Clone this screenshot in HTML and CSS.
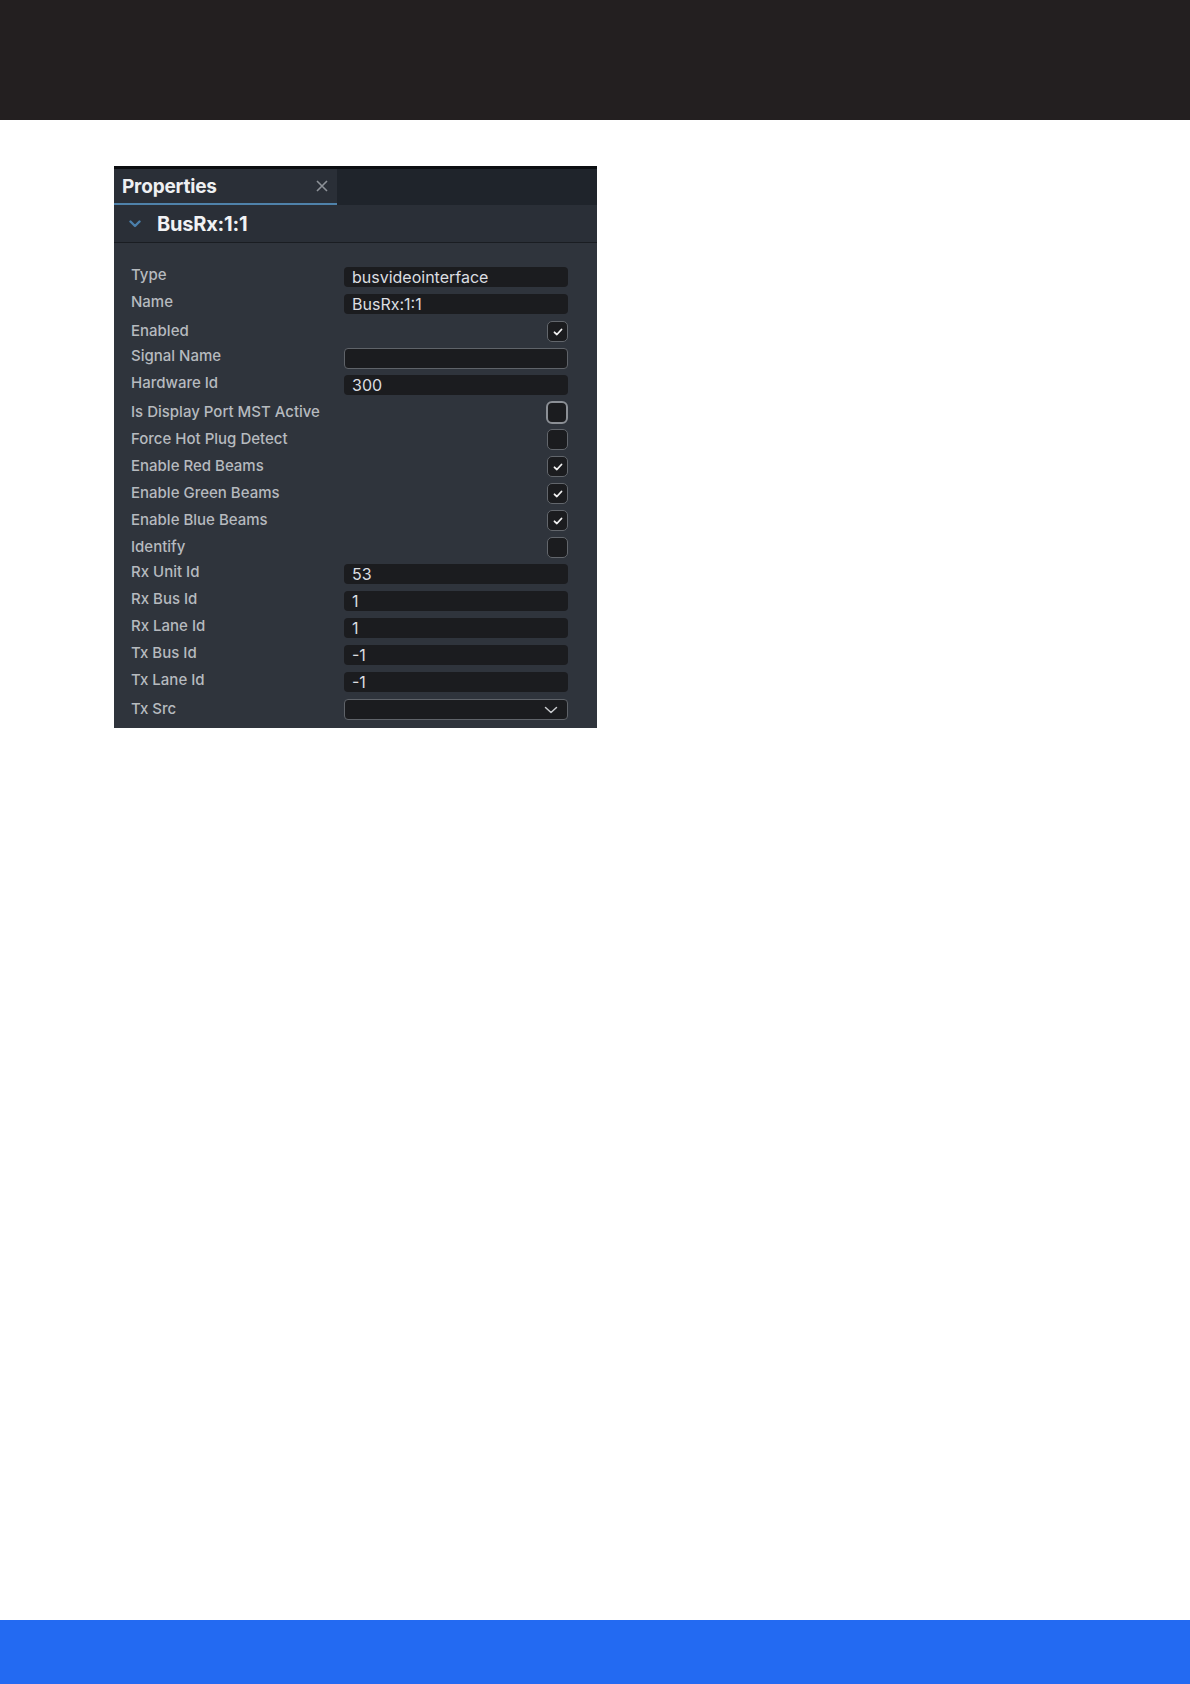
FILE: index.html
```html
<!DOCTYPE html>
<html lang="en">
<head>
<meta charset="utf-8">
<title>Properties</title>
<link rel="stylesheet" href="styles.css">
</head>
<body>
<header class="topbar"></header>
<main class="page">
  <section class="panel">
    <div class="tabbar">
      <div class="tab">
        <span class="tab-title">Properties</span>
        <svg class="tab-close" width="12" height="12" viewBox="0 0 12 12"><path d="M1 1 L11 11 M11 1 L1 11" stroke="#8d9298" stroke-width="1.6" fill="none"/></svg>
      </div>
    </div>
    <div class="section-head">
      <svg class="chev" width="12" height="8" viewBox="0 0 12 8"><polyline points="1.5,1.5 6,6 10.5,1.5" stroke="#4b7fab" stroke-width="2.4" fill="none" stroke-linecap="round" stroke-linejoin="round"/></svg>
      <span class="section-title">BusRx:1:1</span>
    </div>
    <div class="props">
      <div class="row"><span class="label">Type</span><div class="field">busvideointerface</div></div>
      <div class="row"><span class="label">Name</span><div class="field">BusRx:1:1</div></div>
      <div class="row toggle"><span class="label">Enabled</span><div class="check on"><svg width="10" height="8" viewBox="0 0 10 8"><polyline points="1.5,4.3 3.9,6.5 8.5,1.5" stroke="#f2f2f2" stroke-width="1.8" fill="none" stroke-linecap="round" stroke-linejoin="round"/></svg></div></div>
      <div class="row"><span class="label">Signal Name</span><div class="field outlined"></div></div>
      <div class="row"><span class="label">Hardware Id</span><div class="field">300</div></div>
      <div class="row toggle"><span class="label">Is Display Port MST Active</span><div class="check focus"></div></div>
      <div class="row toggle"><span class="label">Force Hot Plug Detect</span><div class="check"></div></div>
      <div class="row toggle"><span class="label">Enable Red Beams</span><div class="check on"><svg width="10" height="8" viewBox="0 0 10 8"><polyline points="1.5,4.3 3.9,6.5 8.5,1.5" stroke="#f2f2f2" stroke-width="1.8" fill="none" stroke-linecap="round" stroke-linejoin="round"/></svg></div></div>
      <div class="row toggle"><span class="label">Enable Green Beams</span><div class="check on"><svg width="10" height="8" viewBox="0 0 10 8"><polyline points="1.5,4.3 3.9,6.5 8.5,1.5" stroke="#f2f2f2" stroke-width="1.8" fill="none" stroke-linecap="round" stroke-linejoin="round"/></svg></div></div>
      <div class="row toggle"><span class="label">Enable Blue Beams</span><div class="check on"><svg width="10" height="8" viewBox="0 0 10 8"><polyline points="1.5,4.3 3.9,6.5 8.5,1.5" stroke="#f2f2f2" stroke-width="1.8" fill="none" stroke-linecap="round" stroke-linejoin="round"/></svg></div></div>
      <div class="row toggle"><span class="label">Identify</span><div class="check"></div></div>
      <div class="row"><span class="label">Rx Unit Id</span><div class="field">53</div></div>
      <div class="row"><span class="label">Rx Bus Id</span><div class="field">1</div></div>
      <div class="row"><span class="label">Rx Lane Id</span><div class="field">1</div></div>
      <div class="row"><span class="label">Tx Bus Id</span><div class="field">-1</div></div>
      <div class="row"><span class="label">Tx Lane Id</span><div class="field">-1</div></div>
      <div class="row toggle"><span class="label">Tx Src</span><div class="field outlined select"><svg width="14" height="8" viewBox="0 0 14 8"><polyline points="1.5,1.5 7,6.5 12.5,1.5" stroke="#c9cbce" stroke-width="1.5" fill="none" stroke-linecap="round" stroke-linejoin="round"/></svg></div></div>
    </div>
  </section>
</main>
<footer class="bottombar"></footer>
</body>
</html>
```
FILE: styles.css
```css
html, body {
  margin: 0;
  padding: 0;
}
body {
  width: 1190px;
  min-height: 1684px;
  display: flex;
  flex-direction: column;
  background: #ffffff;
  font-family: "Inter", "Noto Sans", "Liberation Sans", sans-serif;
}
.topbar {
  height: 120px;
  background: #231f20;
  flex: none;
}
.page {
  flex: 1;
  padding: 46px 0 0 114px;
}
.bottombar {
  height: 64px;
  background: #236af2;
  flex: none;
}
.panel {
  width: 483px;
  background: #2f343c;
  border-top: 3px solid #0c0e11;
}
.tabbar {
  height: 36px;
  background: #1f242b;
  display: flex;
}
.tab {
  width: 223px;
  box-sizing: border-box;
  height: 36px;
  background: #2a2f37;
  border-bottom: 2px solid #4f82aa;
  display: flex;
  align-items: center;
  justify-content: space-between;
  padding: 0 9px 0 8px;
}
.tab-title {
  color: #eef0f2;
  font-weight: 700;
  font-size: 19px;
  letter-spacing: -0.2px;
}
.tab-close {
  display: block;
}
.section-head {
  height: 37px;
  background: #2a2f37;
  border-bottom: 1px solid #1a1d22;
  display: flex;
  align-items: center;
  padding-left: 15px;
}
.chev {
  display: block;
  margin-right: 16px;
}
.section-title {
  color: #f1f2f4;
  font-weight: 700;
  font-size: 20px;
  letter-spacing: -0.2px;
}
.props {
  padding: 21px 29px 5px 17px;
}
.row {
  display: grid;
  grid-template-columns: 213px 224px;
  height: 27px;
  align-items: start;
}
.label {
  color: #b6babf;
  font-size: 15px;
  line-height: 22px;
  font-weight: 500;
  white-space: nowrap;
}
.row.toggle .label {
  padding-top: 2px;
}
.field {
  box-sizing: border-box;
  height: 20px;
  margin-top: 3px;
  background: #1b1c1f;
  border-radius: 4px;
  color: #dcdee1;
  font-size: 16px;
  line-height: 20px;
  padding-left: 8px;
}
.field.outlined {
  border: 1px solid #5f6369;
  height: 21px;
  line-height: 19px;
}
.field.select {
  display: flex;
  align-items: center;
  justify-content: flex-end;
  padding-right: 9px;
}
.field.select svg {
  display: block;
}
.check {
  justify-self: end;
  box-sizing: border-box;
  width: 21px;
  height: 21px;
  margin-top: 3px;
  background: #1b1c1f;
  border: 1.5px solid #62666c;
  border-radius: 5px;
  display: flex;
  align-items: center;
  justify-content: center;
}
.check svg {
  display: block;
}
.check.focus {
  width: 22px;
  height: 23px;
  margin-top: 2px;
  border: 2px solid #8b8f95;
  border-radius: 6px;
}
```
